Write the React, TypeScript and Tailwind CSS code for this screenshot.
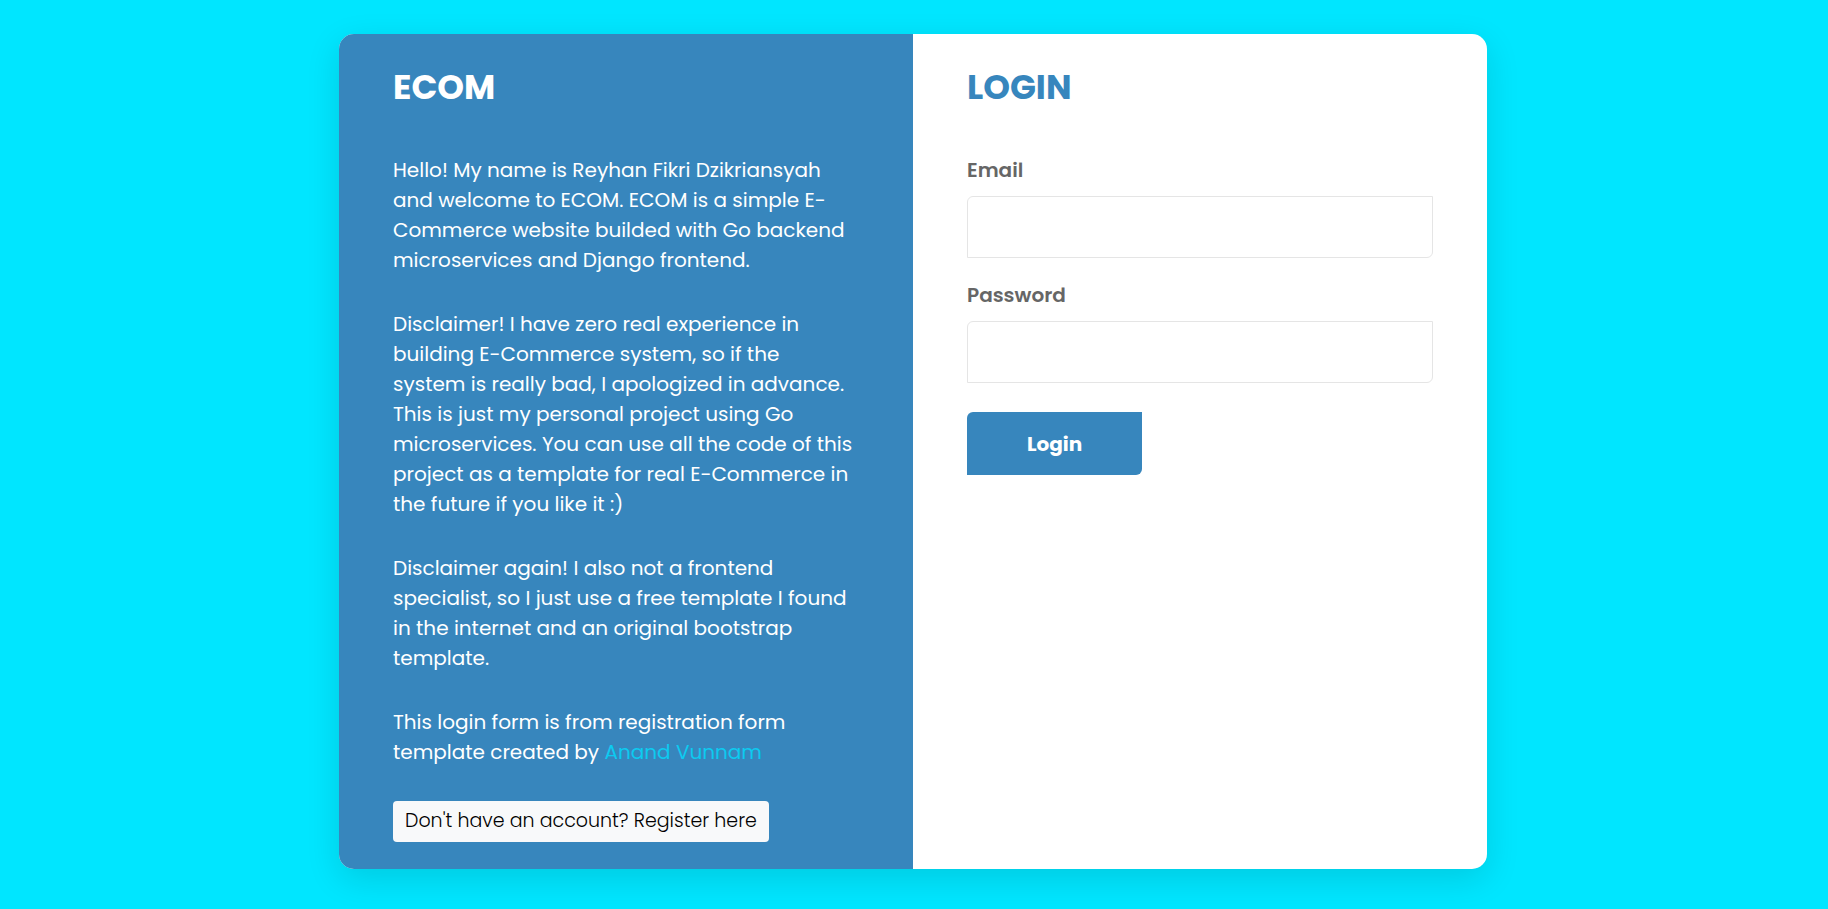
import React from 'react';

const paragraphs: string[][] = [
  [
    'Hello! My name is Reyhan Fikri Dzikriansyah',
    'and welcome to ECOM. ECOM is a simple E-',
    'Commerce website builded with Go backend',
    'microservices and Django frontend.',
  ],
  [
    'Disclaimer! I have zero real experience in',
    'building E-Commerce system, so if the',
    'system is really bad, I apologized in advance.',
    'This is just my personal project using Go',
    'microservices. You can use all the code of this',
    'project as a template for real E-Commerce in',
    'the future if you like it :)',
  ],
  [
    'Disclaimer again! I also not a frontend',
    'specialist, so I just use a free template I found',
    'in the internet and an original bootstrap',
    'template.',
  ],
];

function Lines({ lines }: { lines: string[] }) {
  return (
    <p>
      {lines.map((line) => (
        <span key={line} className="block lg:whitespace-nowrap">
          {line}
        </span>
      ))}
    </p>
  );
}

function Field({ id, label, type }: { id: string; label: string; type: string }) {
  return (
    <div className="flex flex-col gap-3">
      <label htmlFor={id} className="text-[20px] leading-[28px] font-semibold text-[#666666]">
        {label}
      </label>
      <input
        id={id}
        name={id}
        type={type}
        className="h-[62px] w-full rounded-tl-md rounded-br-md border border-[#e5e5e5] bg-white px-5 text-[20px] text-[#666666] outline-none focus:border-[#3786bd]"
      />
    </div>
  );
}

export default function App() {
  return (
    <main className="flex min-h-screen justify-center bg-[#00e6ff] pt-[34px] pr-[18px] pb-10 pl-4 font-['Poppins','Inter',sans-serif]">
      <div className="grid w-full max-w-[1148px] self-start overflow-hidden rounded-[15px] bg-white shadow-[0_10px_34px_0_rgba(0,0,0,0.12)] md:grid-cols-2">
        <section className="bg-[#3786bd] px-[54px] pt-8 pb-[27px] text-white">
          <h1 className="text-[34px] leading-[42px] font-bold">ECOM</h1>
          <div className="mt-[47px] flex flex-col gap-[34px] text-[20px] leading-[30px]">
            {paragraphs.map((lines) => (
              <Lines key={lines[0]} lines={lines} />
            ))}
            <p>
              <span className="block">This login form is from registration form</span>
              template created by{' '}
              <a href="#author" className="text-[#0dcaf0]">
                Anand Vunnam
              </a>
            </p>
          </div>
          <a
            href="#register"
            className="mt-[34px] inline-flex h-[41px] items-center rounded bg-[#f8f9fa] px-3 text-[19px] font-light whitespace-nowrap text-black"
          >
            Don't have an account? Register here
          </a>
        </section>

        <section className="px-[54px] pt-8 pb-[27px]">
          <h2 className="text-[34px] leading-[42px] font-bold text-[#3786bd]">LOGIN</h2>
          <form className="mt-12 flex flex-col gap-[23px]" onSubmit={(e) => e.preventDefault()}>
            <Field id="email" label="Email" type="email" />
            <Field id="password" label="Password" type="password" />
            <button
              type="submit"
              className="mt-1.5 h-[63px] w-[175px] rounded-tl-md rounded-br-md bg-[#3786bd] text-[20px] font-bold text-white"
            >
              Login
            </button>
          </form>
        </section>
      </div>
    </main>
  );
}
